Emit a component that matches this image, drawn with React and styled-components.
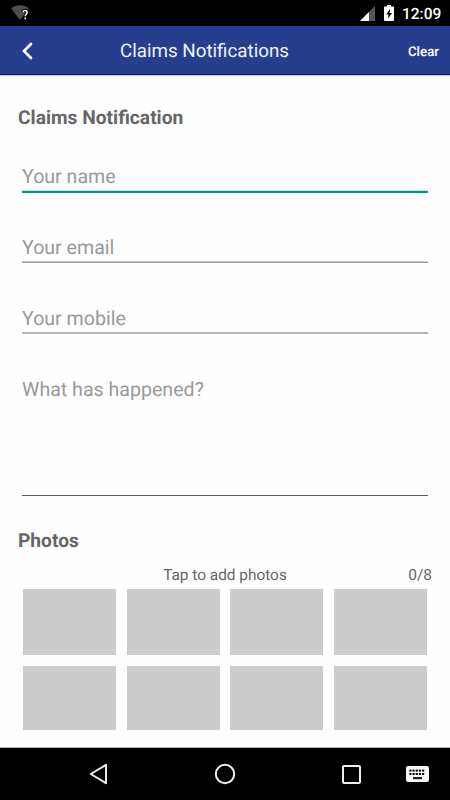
import React from 'react';
import styled, { createGlobalStyle } from 'styled-components';

const GlobalStyle = createGlobalStyle`
    * {
        box-sizing: border-box;
    }
    body {
        margin: 0;
        background: #fefefe;
        font-family: Roboto, sans-serif;
        text-rendering: geometricPrecision;
    }
`;

const Screen = styled.div`
    display: flex;
    flex-direction: column;
    width: 450px;
    height: 800px;
    overflow: hidden;
    background: #fefefe;
`;

const StatusBar = styled.div`
    display: flex;
    align-items: center;
    height: 26px;
    padding: 0 9px 0 10px;
    background: #000;
    color: #fff;
`;

const StatusIcons = styled.div`
    display: flex;
    align-items: center;
    margin-left: auto;
    gap: 9px;
`;

const Clock = styled.span`
    width: 39px;
    font-size: 15.5px;
    font-weight: 500;
    line-height: 26px;
    margin-top: 1px;
    margin-left: -1px;
`;

const Header = styled.header`
    display: grid;
    grid-template-columns: 80px 1fr 80px;
    align-items: center;
    height: 50px;
    background: #253f8e;
    border-bottom: 1px solid #c8cdea;
    box-shadow: inset 0 -1px 0 #04117f;
    color: #fff;
`;

const HeaderButton = styled.button`
    display: flex;
    align-items: center;
    height: 49px;
    border: 0;
    background: none;
    color: #fff;
    font-family: inherit;
    font-size: 13.3px;
    font-weight: 500;
    text-rendering: inherit;
    justify-content: ${({ $end }) => ($end ? 'flex-end' : 'flex-start')};
    padding: ${({ $end }) => ($end ? '3px 11px 0 0' : '0 0 0 20px')};
`;

const Title = styled.h1`
    margin: 0;
    padding: 2px 41px 0 0;
    text-align: center;
    font-size: 18.8px;
    font-weight: 400;
    line-height: 47px;
    color: #f0f2fb;
`;

//Form holds both section headings, the fields and the photo grid
const Form = styled.form`
    display: flex;
    flex-direction: column;
    flex: 1;
    padding: 28px 18px 0;
    border-bottom: 1px solid #b4b4b4;
`;

const SectionTitle = styled.h2`
    margin: 0;
    height: 28px;
    font-size: 19.2px;
    font-weight: 700;
    line-height: 28px;
    color: #666;
`;

const Fields = styled.div`
    display: flex;
    flex-direction: column;
    padding: 29px 4px 0;
    margin-bottom: 31px;
`;

const Field = styled.input`
    width: 100%;
    height: 31px;
    margin-bottom: 40px;
    padding: 0 0 1px;
    border: 0;
    border-radius: 0;
    outline: none;
    background: ${({ $line }) => $line || 'linear-gradient(#c8c8c8 50%, #989898 50%)'} bottom / 100% 2px no-repeat;
    font-family: inherit;
    font-size: 19.6px;
    text-rendering: inherit;
    color: #333;

    &::placeholder {
        color: #999;
        opacity: 1;
    }
`;

const ActiveField = styled(Field)`
    height: 32px;
    margin-bottom: 39px;
    padding-bottom: 1px;
    background: linear-gradient(#c8e4e1 33.3%, #009688 33.3%) bottom / 100% 3px no-repeat;
`;

const TextArea = styled.textarea`
    width: 100%;
    height: 122px;
    padding: 3px 0 0;
    border: 0;
    border-bottom: 1px solid #5c5c5c;
    border-radius: 0;
    outline: none;
    resize: none;
    background: none;
    font-family: inherit;
    font-size: 19.6px;
    text-rendering: inherit;
    line-height: 26px;
    color: #333;

    &::placeholder {
        color: #999;
        opacity: 1;
    }
`;

const PhotoInfo = styled.div`
    display: grid;
    grid-template-columns: 1fr auto 1fr;
    height: 22px;
    margin-top: 9px;
    font-size: 15.4px;
    line-height: 22px;
    color: #666;
`;

const Hint = styled.span`
    grid-column: 2;
`;

const Count = styled.span`
    text-align: right;
`;

const PhotoGrid = styled.div`
    display: grid;
    grid-template-columns: repeat(4, 93px);
    grid-template-rows: 66px 64px;
    justify-content: space-between;
    row-gap: 11px;
    padding: 0 5px;
    margin-top: 3px;
`;

const PhotoSlot = styled.div`
    background: #ccc;
`;

const NavBar = styled.nav`
    display: flex;
    align-items: center;
    height: 52px;
    padding: 0 21px 0 89px;
    background: #000;
`;

const NavIcon = styled.svg`
    display: block;
    flex: none;
    margin-left: ${({ $gap }) => $gap || 0}px;
`;

const WifiIcon = () => (
    <svg width="20" height="16" viewBox="0 0 20 16">
        <path d="M1 3.4C6-.8 14-.8 19 3.4L10 15z" fill="#4d4d4d" />
        <path d="M13 7.3c.2-2.6 4.2-2.6 4.2.1 0 1.8-2 1.9-2 4M15.2 12.7v1.8" fill="none" stroke="#000" strokeWidth="3.2" />
        <path d="M13.1 7.4c.1-2.5 4-2.5 4 0 0 1.7-1.9 1.9-1.9 3.8M15.2 12.6v1.6" fill="none" stroke="#fff" strokeWidth="1.5" />
    </svg>
);

const SignalIcon = () => (
    <svg width="15" height="15" viewBox="0 0 15 15">
        <path d="M15 0v15H0z" fill="#555" />
        <path d="M9 6v9H0z" fill="#fff" />
    </svg>
);

const BatteryIcon = () => (
    <svg width="10" height="16" viewBox="0 0 10 16">
        <path d="M3 0h4v1.5h2q1 0 1 1V15q0 1-1 1H1q-1 0-1-1V2.5q0-1 1-1h2z" fill="#fff" />
        <path d="M6.2 3.8L2.2 9.4h2.3L4 13.7l4-5.6H5.7z" fill="#000" />
    </svg>
);

const BackChevron = () => (
    <svg width="14" height="18" viewBox="0 0 14 18">
        <path d="M11 2L4 9l7 7" fill="none" stroke="#fff" strokeWidth="2.7" strokeLinecap="round" strokeLinejoin="miter" />
    </svg>
);

const KEY_COLUMNS = [3.3, 6.5, 9.7, 12.9, 16.1];

const Keyboard = () => (
    <NavIcon $gap={45} width="23" height="16" viewBox="0 0 23 16">
        <rect width="23" height="16" rx="2" fill="#f7f7f7" />
        {KEY_COLUMNS.map((x) => (
            <React.Fragment key={x}>
                <rect x={x} y="3.6" width="2.1" height="2" fill="#000" />
                <rect x={x} y="7" width="2.1" height="2" fill="#000" />
            </React.Fragment>
        ))}
        <rect x="7" y="11" width="9" height="2.2" fill="#222" />
    </NavIcon>
);

const SLOTS = [1, 2, 3, 4, 5, 6, 7, 8];

export default function App() {
    return (
        <Screen>
            <GlobalStyle />
            <StatusBar>
                <WifiIcon />
                <StatusIcons>
                    <SignalIcon />
                    <BatteryIcon />
                    <Clock>12:09</Clock>
                </StatusIcons>
            </StatusBar>
            <Header>
                <HeaderButton aria-label="Back"><BackChevron /></HeaderButton>
                <Title>Claims Notifications</Title>
                <HeaderButton $end>Clear</HeaderButton>
            </Header>
            <Form>
                <SectionTitle>Claims Notification</SectionTitle>
                <Fields>
                    <ActiveField type="text" name="name" placeholder="Your name" />
                    <Field type="text" name="email" placeholder="Your email" />
                    <Field
                        type="text"
                        name="mobile"
                        placeholder="Your mobile"
                        $line="linear-gradient(#b4b4b4, #b4b4b4)"
                    />
                    <TextArea name="details" placeholder="What has happened?" />
                </Fields>
                <SectionTitle>Photos</SectionTitle>
                <PhotoInfo>
                    <Hint>Tap to add photos</Hint>
                    <Count>0/8</Count>
                </PhotoInfo>
                <PhotoGrid>
                    {SLOTS.map((slot) => <PhotoSlot key={slot} />)}
                </PhotoGrid>
            </Form>
            <NavBar>
                <NavIcon width="19" height="22" viewBox="0 0 19 22">
                    <path d="M17 1.8v18.4L1.8 11z" fill="none" stroke="#eee" strokeWidth="2" strokeLinejoin="round" />
                </NavIcon>
                <NavIcon $gap={106} width="22" height="22" viewBox="0 0 22 22">
                    <circle cx="11" cy="11" r="9.2" fill="none" stroke="#eee" strokeWidth="2" />
                </NavIcon>
                <NavIcon $gap={106} width="19" height="19" viewBox="0 0 19 19">
                    <rect x="1" y="1" width="17" height="17" rx="1" fill="none" stroke="#eee" strokeWidth="2" />
                </NavIcon>
                <Keyboard />
            </NavBar>
        </Screen>
    );
}
